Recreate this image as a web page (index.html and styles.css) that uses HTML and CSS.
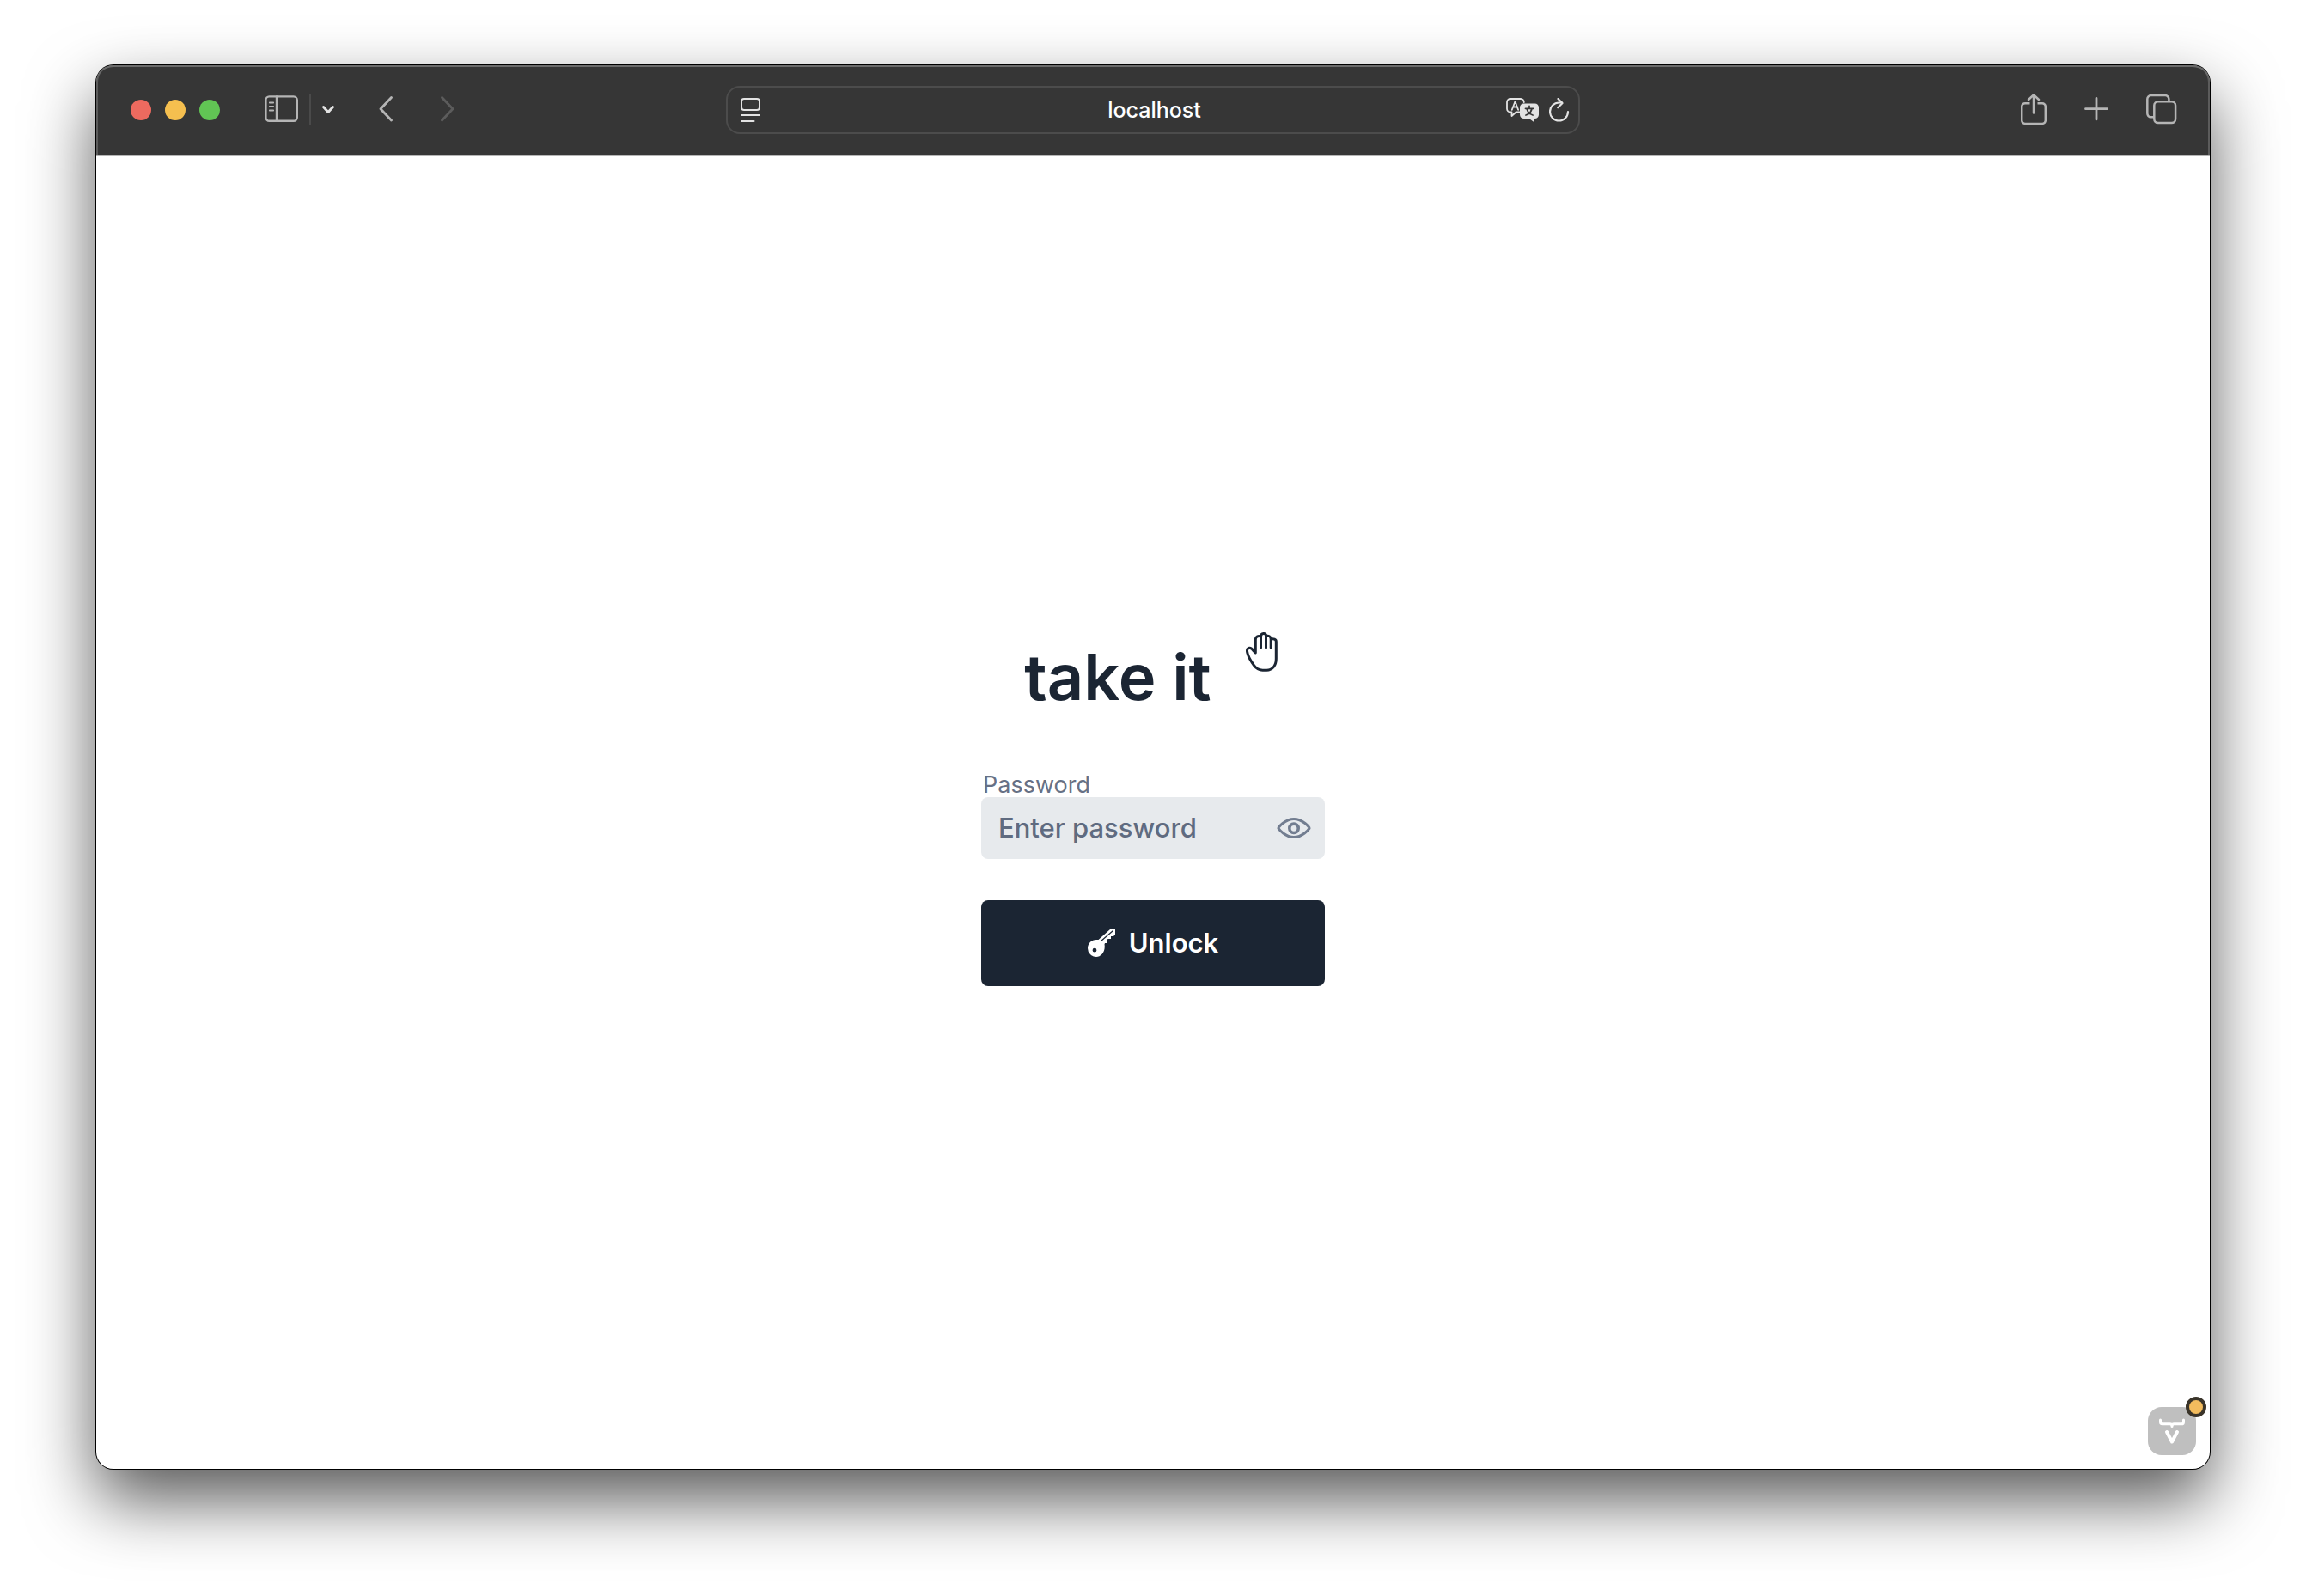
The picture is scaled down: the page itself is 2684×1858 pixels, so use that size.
FILE: index.html
```html
<!DOCTYPE html>
<html lang="en">
<head>
<meta charset="utf-8">
<meta name="viewport" content="width=device-width, initial-scale=1">
<title>take it</title>
<link rel="stylesheet" href="styles.css">
</head>
<body>
<div class="window">
  <header class="toolbar">
    <div class="side">
      <div class="lights">
        <span class="light close"></span>
        <span class="light minimize"></span>
        <span class="light maximize"></span>
      </div>
      <div class="sidebar-group">
        <button class="tool" type="button" aria-label="Show sidebar">
          <svg width="40" height="36" viewBox="0 0 40 36" fill="none" stroke="currentColor" stroke-width="2.4" stroke-linecap="round"><rect x="1.4" y="2.4" width="36.4" height="28.4" rx="4"/><path d="M14 2.5v28"/><path stroke-width="1.8" d="M5.8 9.5h4.4M5.8 14h4.4M5.8 18.5h4.4"/></svg>
        </button>
        <span class="divider"></span>
        <button class="tool bright" type="button" aria-label="Tab groups">
          <svg width="16" height="36" viewBox="0 0 16 36" fill="none" stroke="currentColor" stroke-width="3" stroke-linecap="round" stroke-linejoin="round"><path d="M2.5 14.5 8 20.5l5.500-6"/></svg>
        </button>
      </div>
      <div class="history">
        <button class="tool" type="button" aria-label="Back">
          <svg width="16" height="36" viewBox="0 0 16 36" fill="none" stroke="currentColor" stroke-width="2.8" stroke-linecap="round" stroke-linejoin="round"><path d="M14.500 3.500 2 16.800 14.500 30"/></svg>
        </button>
        <button class="tool dim" type="button" aria-label="Forward">
          <svg width="16" height="36" viewBox="0 0 16 36" fill="none" stroke="currentColor" stroke-width="2.800" stroke-linecap="round" stroke-linejoin="round"><path d="M1.500 3.500 14 16.800 1.500 30"/></svg>
        </button>
      </div>
    </div>
    <div class="address">
      <button class="tool bright" type="button" aria-label="Page menu">
        <svg width="24" height="28" viewBox="0 0 24 28" fill="none" stroke="currentColor" stroke-width="2" stroke-linecap="round"><rect x="1" y="1" width="21" height="13" rx="3"/><path d="M1 20h21M1 27h14.500"/></svg>
      </button>
      <span class="host">localhost</span>
      <div class="address-tools">
        <button class="tool bright" type="button" aria-label="Translate">
          <svg width="38" height="28" viewBox="0 0 38 28" fill="none" stroke="currentColor" stroke-width="1.800" stroke-linecap="round" stroke-linejoin="round"><path d="M15.500 16.500h-4L6.500 21v-4.500H5a4 4 0 0 1-4-4V5a4 4 0 0 1 4-4h12a4 4 0 0 1 3.800 4"/><path d="M6.800 13.800 10.500 4l3.600 9.800M8 10.500h5"/><path fill="currentColor" stroke="none" d="M20.500 6.500h13a4.500 4.500 0 0 1 4.500 4.500v8.500a4.500 4.500 0 0 1-4.500 4.500h-1.200v4l-5.500-4h-6.300a4.500 4.500 0 0 1-4.500-4.500V11a4.500 4.500 0 0 1 4.500-4.500z"/><path stroke="#363636" d="M27 9.500v2.300M22.500 12.300h9M24 12.500c1 4 3.500 6.500 7 7.500M30 12.500c-1 4-3.500 6.500-7 7.500"/></svg>
        </button>
        <button class="tool bright" type="button" aria-label="Reload">
          <svg width="24" height="28" viewBox="0 0 24 28" fill="none" stroke="currentColor" stroke-width="2.200" stroke-linecap="round" stroke-linejoin="round"><path d="M22 16a10.500 10.500 0 1 1-10.500-10.500H15"/><path d="m10.500 1 5 5-5.200 5.200"/></svg>
        </button>
      </div>
    </div>
    <div class="side actions">
      <button class="tool" type="button" aria-label="Share">
        <svg width="30" height="38" viewBox="0 0 30 38" fill="none" stroke="currentColor" stroke-width="2.500" stroke-linecap="round" stroke-linejoin="round"><path stroke-linecap="butt" d="M10.500 11.300H5a3.800 3.800 0 0 0-3.800 3.800v16A3.800 3.800 0 0 0 5 34.900h20a3.800 3.800 0 0 0 3.800-3.800v-16a3.800 3.800 0 0 0-3.800-3.800h-5.500"/><path d="M15 22.500V2M9 7 15 1.300l6 5.700"/></svg>
      </button>
      <button class="tool" type="button" aria-label="New tab">
        <svg width="28" height="38" viewBox="0 0 28 38" fill="none" stroke="currentColor" stroke-width="2.800" stroke-linecap="round"><path d="M14 5.500v24.400M1.500 17.700h25"/></svg>
      </button>
      <button class="tool" type="button" aria-label="Tab overview">
        <svg width="36" height="38" viewBox="0 0 36 38" fill="none" stroke="currentColor" stroke-width="2.500"><rect x="9.300" y="9.300" width="24.800" height="24.800" rx="4.500"/><path d="M9 27.300H5.500A4.200 4.200 0 0 1 1.300 23V6.300A4.200 4.200 0 0 1 5.500 2.100h16.700a4.200 4.200 0 0 1 4.200 4.200V9"/></svg>
      </button>
    </div>
  </header>
  <main class="page">
    <form class="login">
      <div class="brand">
        <h1>take it</h1>
        <svg class="hand" width="38" height="46" viewBox="0 0 38 46" fill="none" stroke="currentColor" stroke-width="3" stroke-linecap="round" stroke-linejoin="round"><path d="M11.300 24V8.500C11.300 5 14 4 17.500 5V18V5C17.500 .5 23.500 .5 23.500 4V18V4.500C26.500 4 29.200 4.500 29.200 8V18V8C32.500 7.500 35.300 8 35.300 11V31c0 8-4.500 13.200-11 13.200h-4.800c-4 0-7.500-2-10-5.500C6.500 34.500 3 28.500 2 24.500c-.900-3-.500-5.300 1.300-6 2.700-.900 4.200 1 5.700 3.200z"/></svg>
      </div>
      <label for="password">Password</label>
      <div class="field">
        <input id="password" type="password" placeholder="Enter password">
        <button class="reveal" type="button" aria-label="Show password">
          <svg width="40" height="24" viewBox="0 0 40 24" fill="none" stroke="currentColor"><path stroke-width="3" d="M2 12.300C1.200 11.300 10 1.500 20 1.500s18.800 9.800 18 10.800c-1 1.500-8 10.200-18 10.200S3 13.800 2 12.300z"/><circle cx="20" cy="12.300" r="5.200" stroke-width="3.600"/></svg>
        </button>
      </div>
      <button class="unlock" type="submit">
        <svg width="32" height="32" viewBox="0 0 32 32"><path fill="currentColor" fill-rule="evenodd" d="M26 0h6v6l-2 2h-3v3h-3.500l-1.500 2v3h-2l-.5 1.500c1.500 8-4 14.500-9.500 14.500a10 10 0 0 1-10-10c0-5.500 4.500-10 10-10h2.500zM8 21.800a2.400 2.400 0 1 0 0 4.800 2.400 2.400 0 0 0 0-4.800z"/><path d="M15.500 13.500 29.500 1.500" stroke="#1b2533" stroke-width="1.200"/></svg>
        <span>Unlock</span>
      </button>
    </form>
    <button class="devtools" type="button" aria-label="Development tools">
      <svg width="32" height="32" viewBox="0 0 32 32" fill="none" stroke="#fff" stroke-width="4" stroke-linecap="round" stroke-linejoin="round"><path stroke-width="3" d="M2.500 3v2.500c0 1.500.7 2.300 2.200 2.300h8.800c1.500 0 2.500.7 2.500 2.700 0-2 1-2.700 2.500-2.700h8.800c1.500 0 2.200-.8 2.200-2.300V3"/><path d="m10 17 6 11.500L22 17"/></svg>
      <span class="status"></span>
    </button>
  </main>
</div>
</body>
</html>
```
FILE: styles.css
```css
* {
  box-sizing: border-box;
}

body {
  margin: 0;
  min-height: 100vh;
  padding: 76px 112px 148px;
  display: flex;
  background: #fff;
  color: #1b2533;
  font-family: Inter, "Liberation Sans", sans-serif;
}

button {
  padding: 0;
  border: 0;
  background: none;
  color: inherit;
  font: inherit;
}

svg {
  display: block;
}

.window {
  flex: 1;
  display: flex;
  flex-direction: column;
  border-radius: 20px;
  background: #fff;
  box-shadow: 0 0 0 1px #000, 0 36px 80px rgba(0, 0, 0, 0.66);
}

.toolbar {
  height: 105px;
  flex: none;
  display: flex;
  align-items: center;
  padding: 0 38px;
  border-bottom: 1px solid #000;
  border-radius: 20px 20px 0 0;
  background: #363636;
  box-shadow: inset 0 2px 0 #6b6b6b, inset 2px 0 0 #5c5c5c, inset -2px 0 0 #5c5c5c, 0 1px 0 #b5b5b5;
}

.side {
  flex: 1;
  display: flex;
  align-items: center;
}

.lights {
  display: flex;
  gap: 16px;
  margin-left: 2px;
}

.light {
  width: 24px;
  height: 24px;
  border-radius: 50%;
}

.close {
  background: #ed6a5f;
}

.minimize {
  background: #f5bf4f;
}

.maximize {
  background: #61c554;
}

.tool {
  color: #b5b5b5;
}

.bright {
  color: #e3e3e3;
}

.dim {
  color: #5c5c5c;
}

.sidebar-group {
  display: flex;
  align-items: center;
  gap: 12px;
  margin-left: 52px;
}

.divider {
  width: 2px;
  height: 36px;
  background: #4a4a4a;
}

.history {
  display: flex;
  gap: 56px;
  margin-left: 51px;
}

.address {
  flex: 0 1 994px;
  height: 56px;
  display: flex;
  align-items: center;
  justify-content: space-between;
  padding: 0 10px 0 15px;
  border: 2px solid #4c4c4c;
  border-radius: 16px;
}

.address > .tool {
  margin-right: 48px;
}

.host {
  color: #fff;
  font-size: 25px;
  font-weight: 500;
  line-height: 32px;
}

.address-tools {
  display: flex;
  gap: 12px;
}

.actions {
  justify-content: flex-end;
  gap: 44px;
}

.page {
  position: relative;
  flex: 1;
  display: flex;
  align-items: center;
  justify-content: center;
  padding-bottom: 8px;
}

.login {
  width: 400px;
  display: flex;
  flex-direction: column;
}

.brand {
  display: flex;
  align-items: flex-start;
  justify-content: center;
  gap: 40px;
  margin-bottom: 60px;
  padding-right: 4px;
}

.brand h1 {
  margin: 0;
  font-size: 74px;
  font-weight: 600;
  line-height: 104px;
}

label {
  padding-left: 2px;
  color: #667085;
  font-size: 27px;
  line-height: 28px;
}

.field {
  display: flex;
  align-items: center;
  height: 72px;
  padding: 0 16px 0 20px;
  border-radius: 8px;
  background: #e7eaed;
}

.field input {
  flex: 1;
  min-width: 0;
  padding: 0;
  border: 0;
  background: none;
  color: inherit;
  font: 500 31px/40px Inter, "Liberation Sans", sans-serif;
}

.field input::placeholder {
  color: #5f6b80;
  opacity: 1;
}

.reveal {
  color: #727d90;
}

.unlock {
  display: flex;
  align-items: center;
  justify-content: center;
  gap: 16px;
  height: 100px;
  margin-top: 48px;
  border-radius: 8px;
  background: #1b2533;
  color: #fff;
  font-size: 31px;
  font-weight: 600;
}

.devtools {
  position: absolute;
  right: 16px;
  bottom: 16px;
  width: 56px;
  height: 56px;
  padding: 12px;
  border-radius: 16px;
  background: #bfbfbf;
}

.status {
  position: absolute;
  top: -12px;
  right: -12px;
  width: 24px;
  height: 24px;
  border: 4px solid #3a342a;
  border-radius: 50%;
  background: #f3bc5e;
}
```
